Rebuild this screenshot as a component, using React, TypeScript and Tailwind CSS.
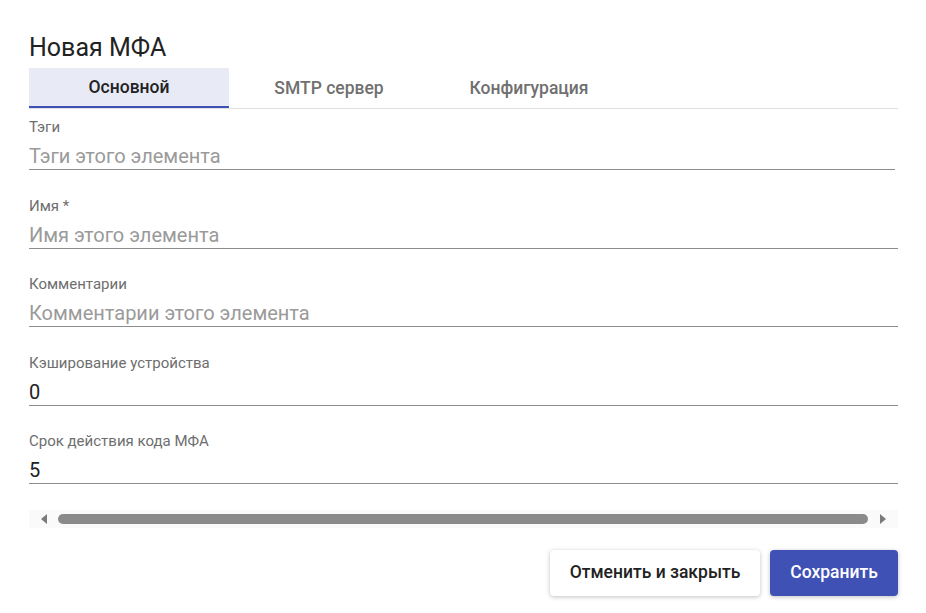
import React from "react";

const tabs = ["Основной", "SMTP сервер", "Конфигурация"];

type Field = {
  label: string;
  placeholder?: string;
  value?: string;
};

const fields: Field[] = [
  { label: "Тэги", placeholder: "Тэги этого элемента" },
  { label: "Имя *", placeholder: "Имя этого элемента" },
  { label: "Комментарии", placeholder: "Комментарии этого элемента" },
  { label: "Кэширование устройства", value: "0" },
  { label: "Срок действия кода МФА", value: "5" },
];

function FormField({ field, short }: { field: Field; short?: boolean }) {
  return (
    <div className="flex flex-col mb-[25.5px]">
      <label className="text-[15px] leading-5 text-[#6e6e6e]">{field.label}</label>
      <div
        className={`h-[33px] flex items-end pb-[1px] border-b border-[#8c8c8c] ${
          short ? "mr-[3px]" : ""
        }`}
      >
        {field.value ? (
          <span className="text-[20px] leading-[24px] text-[#222222]">{field.value}</span>
        ) : (
          <span className="text-[20px] leading-[24px] text-[#9a9a9a]">{field.placeholder}</span>
        )}
      </div>
    </div>
  );
}

export default function App() {
  return (
    <div
      className="w-[926px] h-[613px] bg-white pl-[29px] pr-[28px] pt-[32px] overflow-hidden"
      style={{ fontFamily: "Roboto, 'Noto Sans', sans-serif" }}
    >
      <h1 className="text-[25px] leading-[32px] text-[#222222]">Новая МФА</h1>

      {/* tabs */}
      <div className="flex border-b border-[#e0e0e0] mt-[4px]">
        {tabs.map((t, i) => (
          <div
            key={t}
            className={`w-[200px] h-[40px] flex items-center justify-center text-[17.5px] font-medium ${
              i === 0
                ? "bg-[#e8eaf6] text-[#222222] border-b-2 border-[#3f51b5]"
                : "text-[#707070]"
            }`}
          >
            {t}
          </div>
        ))}
      </div>

      <div className="mt-[8px]">
        {fields.map((f, i) => (
          <FormField key={f.label} field={f} short={i === 0} />
        ))}
      </div>

      {/* horizontal scrollbar */}
      <div className="h-[18px] mt-[4px] bg-[#fafafa] flex items-center">
        <div className="w-[29px] flex justify-center">
          <div className="w-0 h-0 border-y-[5px] border-y-transparent border-r-[6px] border-r-[#7a7a7a]" />
        </div>
        <div className="flex-1 h-[10px] rounded-full bg-[#8a8a8a]" />
        <div className="w-[30px] flex justify-center">
          <div className="w-0 h-0 border-y-[5px] border-y-transparent border-l-[6px] border-l-[#7a7a7a]" />
        </div>
      </div>

      {/* actions */}
      <div className="flex justify-end gap-[10px] mt-[22px]">
        <button className="w-[210px] h-[46px] rounded-[4px] bg-white text-[17.5px] font-medium text-[#222222] shadow-[0_1px_4px_rgba(0,0,0,0.25)]">
          Отменить и закрыть
        </button>
        <button className="w-[128px] h-[46px] rounded-[4px] bg-[#3f51b5] text-[17.5px] font-medium text-white shadow-[0_1px_4px_rgba(0,0,0,0.25)]">
          Сохранить
        </button>
      </div>
    </div>
  );
}
